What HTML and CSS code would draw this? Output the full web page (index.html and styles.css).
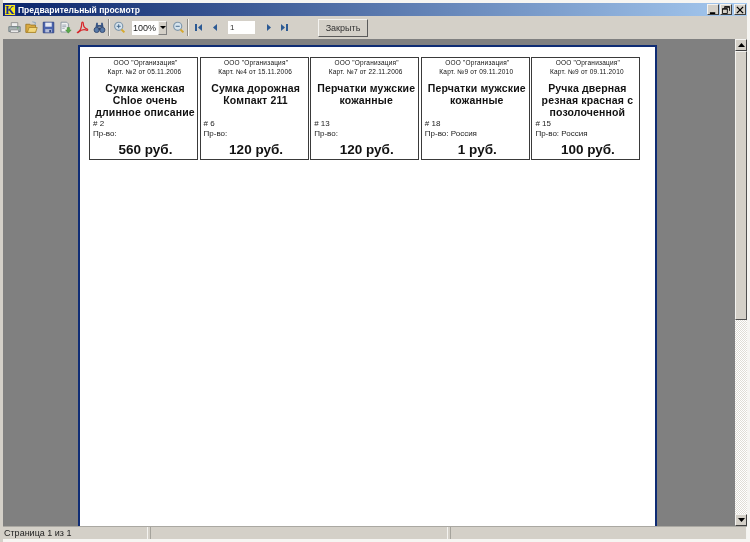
FILE: index.html
```html
<!DOCTYPE html>
<html lang="ru">
<head>
<meta charset="utf-8">
<title>Предварительный просмотр</title>
<link rel="stylesheet" href="styles.css">
</head>
<body>
<div class="window">
  <header class="titlebar">
    <span class="app-logo">K</span>
    <span class="title-text">Предварительный просмотр</span>
    <span class="caption-buttons">
      <span class="cap-btn"><svg width="9" height="9" viewBox="0 0 9 9"><rect x="1" y="7" width="6" height="2" fill="#000"/></svg></span>
      <span class="cap-btn"><svg width="9" height="9" viewBox="0 0 9 9"><path d="M3 0.5h5.5v5M3 0.5v2M3.5 1.5h4.5M0.5 3h5.5v5.5h-5.5zM0.5 3.5h5.5" fill="none" stroke="#000"/></svg></span>
      <span class="cap-btn cap-close"><svg width="9" height="9" viewBox="0 0 9 9"><path d="M1 1l7 7M8 1l-7 7" stroke="#000" stroke-width="1.5"/></svg></span>
    </span>
  </header>

  <div class="toolbar">
    <svg class="icon" viewBox="0 0 16 16"><path d="M4 2h8v5H4z" fill="#eee" stroke="#888"/><path d="M1 7h14v6H1z" fill="#a9b3b5" stroke="#66767c"/><path d="M3 11h10v3H3z" fill="#f4f4f4" stroke="#888"/><rect x="11" y="8" width="2" height="1" fill="#3c9a3c"/></svg>
    <svg class="icon" viewBox="0 0 16 16"><path d="M1 4h5l1 1h6v9H1z" fill="#d9a93f" stroke="#9a7420"/><path d="M3 14l2-6h10l-2 6z" fill="#f3d77c" stroke="#a8842c"/><path d="M9 1l4 1-1 3" fill="none" stroke="#7a9abb"/></svg>
    <svg class="icon" viewBox="0 0 16 16"><path d="M1.500 1.500h13v13h-13z" fill="#4a63ad" stroke="#2b3f80"/><rect x="4" y="2" width="8" height="5" fill="#e6e9f2"/><rect x="4" y="10" width="8" height="4" fill="#b8c0d8"/><rect x="9" y="11" width="2" height="3" fill="#2b3f80"/></svg>
    <svg class="icon" viewBox="0 0 16 16"><path d="M2.500 1.500h7l2 2v10h-9z" fill="#f2f2f2" stroke="#7d8a96"/><path d="M4 5h5M4 7h5M4 9h3" stroke="#8c9aa8"/><path d="M10 8h3v3h2l-3.500 4-3.500-4h2z" fill="#58a84a" stroke="#3c7e34" stroke-width=".5"/></svg>
    <svg class="icon" viewBox="0 0 16 16"><path d="M2 14c3-2 5-7 5-11 0-2 2-2 2 0 0 4 2 6 5 7 1 1 0 2-2 1-4-1-6 0-9 3-1 1-2 0-1 0z" fill="none" stroke="#d8262b" stroke-width="1.500"/></svg>
    <svg class="icon" viewBox="0 0 16 16"><path d="M4 2h2v3h4V2h2l1 6H9V7H7v1H3z" fill="#3a5684"/><circle cx="4.500" cy="11" r="3.200" fill="#587aa8" stroke="#2b3f66"/><circle cx="11.500" cy="11" r="3.200" fill="#587aa8" stroke="#2b3f66"/><rect x="7" y="8" width="2" height="3" fill="#2b3f66"/></svg>
    <span class="tb-sep"></span>
    <svg class="icon" viewBox="0 0 16 16"><circle cx="7" cy="6.500" r="5" fill="#d6e4ee" stroke="#7f97ab" stroke-width="1.400"/><path d="M4.500 6.500h5M7 4v5" stroke="#44688c" stroke-width="1.200"/><path d="M10.500 10.500l3.500 3.500" stroke="#d5a92e" stroke-width="2.400"/></svg>
    <span class="zoom-combo"><span class="zoom-value">100%</span><span class="zoom-arrow"></span></span>
    <svg class="icon" viewBox="0 0 16 16"><circle cx="7" cy="6.500" r="5" fill="#d6e4ee" stroke="#7f97ab" stroke-width="1.400"/><path d="M4.500 6.500h5" stroke="#44688c" stroke-width="1.200"/><path d="M10.500 10.500l3.500 3.500" stroke="#d5a92e" stroke-width="2.400"/></svg>
    <span class="tb-sep"></span>
    <svg class="nav-icon nav-first" viewBox="0 0 9 9"><rect x="1" y="1" width="2" height="7" fill="#2c5a94"/><path d="M8 1v7L4 4.500z" fill="#2c5a94"/></svg>
    <svg class="nav-icon nav-prev" viewBox="0 0 9 9"><path d="M6 1v7L2 4.500z" fill="#2c5a94"/></svg>
    <span class="page-input">1</span>
    <svg class="nav-icon nav-next" viewBox="0 0 9 9"><path d="M3 1v7l4-3.500z" fill="#2c5a94"/></svg>
    <svg class="nav-icon nav-last" viewBox="0 0 9 9"><path d="M1 1v7l4-3.500z" fill="#2c5a94"/><rect x="6" y="1" width="2" height="7" fill="#2c5a94"/></svg>
    <span class="close-btn">Закрыть</span>
  </div>

  <div class="workspace">
    <main class="viewport">
      <div class="sheet">
        <div class="cards">
          <article class="card">
            <div class="org">ООО "Организация"</div>
            <div class="doc">Карт. №2 от 05.11.2006</div>
            <div class="name">Сумка женская Chloe очень длинное описание</div>
            <div class="num"># 2</div>
            <div class="made">Пр-во:</div>
            <div class="price">560 руб.</div>
          </article>
          <article class="card">
            <div class="org">ООО "Организация"</div>
            <div class="doc">Карт. №4 от 15.11.2006</div>
            <div class="name">Сумка дорожная Компакт 211</div>
            <div class="num"># 6</div>
            <div class="made">Пр-во:</div>
            <div class="price">120 руб.</div>
          </article>
          <article class="card">
            <div class="org">ООО "Организация"</div>
            <div class="doc">Карт. №7 от 22.11.2006</div>
            <div class="name">Перчатки мужские кожанные</div>
            <div class="num"># 13</div>
            <div class="made">Пр-во:</div>
            <div class="price">120 руб.</div>
          </article>
          <article class="card">
            <div class="org">ООО "Организация"</div>
            <div class="doc">Карт. №9 от 09.11.2010</div>
            <div class="name">Перчатки мужские кожанные</div>
            <div class="num"># 18</div>
            <div class="made">Пр-во: Россия</div>
            <div class="price">1 руб.</div>
          </article>
          <article class="card">
            <div class="org">ООО "Организация"</div>
            <div class="doc">Карт. №9 от 09.11.2010</div>
            <div class="name">Ручка дверная резная красная с позолоченной</div>
            <div class="num"># 15</div>
            <div class="made">Пр-во: Россия</div>
            <div class="price">100 руб.</div>
          </article>
        </div>
      </div>
    </main>
    <aside class="scrollbar">
      <span class="sb-btn"><svg width="7" height="4" viewBox="0 0 7 4"><path d="M3.500 0L7 4H0z" fill="#000"/></svg></span>
      <span class="sb-thumb"></span>
      <span class="sb-track"></span>
      <span class="sb-btn"><svg width="7" height="4" viewBox="0 0 7 4"><path d="M0 0h7L3.500 4z" fill="#000"/></svg></span>
    </aside>
  </div>

  <footer class="statusbar">
    <span class="st-panel st-first">Страница 1 из 1</span>
    <span class="st-panel st-second"></span>
    <span class="st-panel st-third"></span>
  </footer>
</div>
</body>
</html>
```

FILE: styles.css
```css
* { box-sizing: border-box; }
html, body { margin: 0; padding: 0; }
body {
  width: 750px;
  height: 542px;
  overflow: hidden;
  background: #f4f3f0;
  font-family: "Liberation Sans", Arial, sans-serif;
}
.window {
  width: 750px;
  height: 542px;
  display: flex;
  flex-direction: column;
  padding: 3px 3px 3px 3px;
  background: linear-gradient(90deg, #d4d0c8 0, #d4d0c8 3px, #f6f5f2 3px);
  filter: blur(0.3px);
}
.titlebar {
  height: 13px;
  flex: none;
  display: flex;
  align-items: center;
  background: linear-gradient(90deg, #0a246a 0, #a6caf0 100%);
}
.app-logo {
  width: 12px;
  height: 12px;
  margin: 0 2px 0 1px;
  background: #f4e81a;
  border: 1px solid #1a2a8a;
  color: #1a2a9a;
  font: bold 12px/10px "Liberation Serif", serif;
  text-align: center;
  flex: none;
}
.title-text {
  color: #fff;
  font-weight: bold;
  font-size: 8.500px;
  white-space: nowrap;
}
.caption-buttons {
  margin-left: auto;
  display: flex;
  gap: 1px;
  padding-right: 1px;
}
.cap-close { margin-left: 1px; }
.cap-btn {
  width: 12px;
  height: 11px;
  background: #d4d0c8;
  border: 1px solid;
  border-color: #f4f3f0 #404040 #404040 #f4f3f0;
  display: flex;
  align-items: center;
  justify-content: center;
}
.cap-btn svg { width: 8px; height: 8px; }
.toolbar {
  height: 23px;
  flex: none;
  display: flex;
  align-items: center;
  padding-left: 5px;
  background: #d4d0c8;
  gap: 2px;
}
.icon { width: 13px; height: 13px; flex: none; margin-right: 2px; }
.tb-sep {
  width: 2px;
  height: 17px;
  flex: none;
  margin: 0 1px 0 -2px;
  background: linear-gradient(90deg, #8f8d88 1px, #f4f3f0 1px);
}
.zoom-combo {
  width: 35px;
  height: 14px;
  margin: 0 3px 0 2px;
  display: flex;
  background: #fff;
  flex: none;
}
.zoom-value {
  flex: 1;
  font: 9px/14px "Liberation Sans", sans-serif;
  padding-left: 1px;
  color: #222;
}
.zoom-arrow {
  width: 9px;
  background: #d4d0c8;
  position: relative;
  border: 1px solid;
  border-color: #f4f3f0 #808080 #808080 #f4f3f0;
}
.zoom-arrow::after {
  content: "";
  position: absolute;
  left: 1px;
  top: 4px;
  border: 3px solid transparent;
  border-top-color: #000;
  border-bottom: 0;
}
.nav-icon { width: 9px; height: 9px; flex: none; margin-right: 1px; }
.nav-first { margin-left: 2px; }
.nav-prev { margin-left: 5px; }
.nav-next { margin-left: 7px; }
.nav-last { margin-left: 4px; }
.page-input {
  width: 27px;
  height: 13px;
  margin-left: 5px;
  background: #fff;
  font: 8px/13px "Liberation Sans", sans-serif;
  padding-left: 2px;
  color: #333;
  flex: none;
}
.close-btn {
  width: 50px;
  height: 18px;
  margin-left: 26px;
  border: 1px solid;
  border-color: #f4f3f0 #5a5a5a #5a5a5a #f4f3f0;
  background: #d4d0c8;
  font: 9px/16px "Liberation Sans", sans-serif;
  text-align: center;
  color: #333;
  flex: none;
}
.workspace {
  flex: 1;
  min-height: 0;
  display: flex;
  background: #808080;
}
.viewport {
  width: 732px;
  flex: none;
  padding: 6px 0 0 75px;
  background: #808080;
  overflow: hidden;
}
.sheet {
  width: 579px;
  height: 500px;
  background: #fff;
  border: 2px solid #0f2c74;
  border-bottom: 0;
  padding: 10px 0 0 9px;
}
.cards {
  display: grid;
  grid-template-columns: repeat(5, 109px);
  column-gap: 1.6px;
}
.card {
  height: 103px;
  border: 1px solid #3a3a3a;
  padding: 1px 3px 0;
  display: flex;
  flex-direction: column;
  text-align: center;
  color: #111;
}
.org {
  padding-left: 4px;
  font-size: 6.500px;
  line-height: 8px;
  letter-spacing: 0.2px;
  white-space: nowrap;
}
.doc {
  padding-left: 2px;
  font-size: 6.500px;
  line-height: 9px;
  letter-spacing: 0.2px;
  white-space: nowrap;
}
.name {
  height: 37px;
  margin: 6px -3px 0 0;
  font-size: 10.500px;
  line-height: 12.200px;
  font-weight: bold;
  letter-spacing: 0.15px;
}
.num, .made {
  text-align: left;
  font-size: 8px;
  line-height: 10px;
  color: #222;
}
.price {
  padding-left: 4px;
  font-size: 13.500px;
  line-height: 18px;
  font-weight: bold;
  margin-top: 2px;
}
.scrollbar {
  width: 12px;
  flex: none;
  display: flex;
  flex-direction: column;
  background: #808080;
}
.sb-btn {
  height: 12px;
  flex: none;
  background: #d4d0c8;
  border: 1px solid;
  border-color: #f4f3f0 #404040 #404040 #f4f3f0;
  display: flex;
  align-items: center;
  justify-content: center;
}
.sb-thumb {
  height: 269px;
  flex: none;
  background: #d4d0c8;
  border: 1px solid;
  border-color: #f4f3f0 #505050 #505050 #f4f3f0;
}
.sb-track {
  flex: 1;
  background: repeating-conic-gradient(#e0ddd6 0 25%, #fff 0 50%) 0 0 / 2px 2px;
}
.statusbar {
  height: 13px;
  flex: none;
  display: flex;
  gap: 2px;
  background: #d4d0c8;
  border-top: 1px solid #aaa8a2;
}
.st-panel {
  font: 9px/12px "Liberation Sans", sans-serif;
  color: #222;
  white-space: nowrap;
  border-right: 1px solid #f4f3f0;
  border-left: 1px solid #a5a39c;
}
.st-first { width: 145px; padding-left: 1px; border-left: 0; }
.st-second { width: 298px; }
.st-third { flex: 1; }
```
